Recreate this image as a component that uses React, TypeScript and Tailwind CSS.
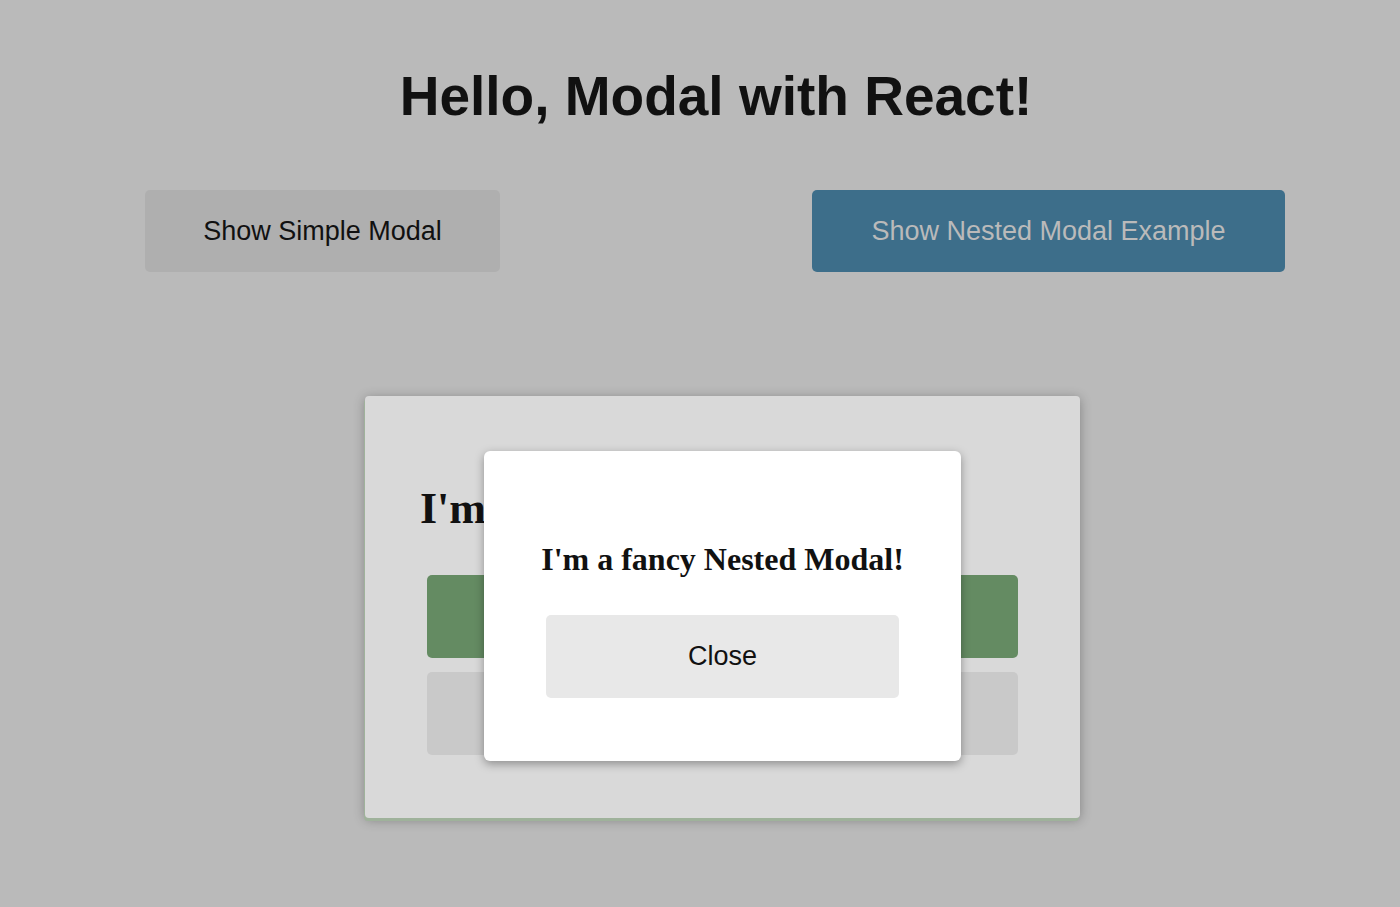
import React from 'react';

const sans = { fontFamily: '"Liberation Sans", Arial, sans-serif' };
const serif = { fontFamily: '"Liberation Serif", "Times New Roman", serif' };

const NestedModal = () => (
  <div className="absolute left-[484px] top-[451px] w-[477px] h-[310px] bg-white rounded-[6px] shadow-[0_3px_10px_rgba(0,0,0,0.35)] flex flex-col items-center pt-[92px] px-[62px]">
    <h2 className="text-[32px] leading-none font-bold text-[#111] whitespace-nowrap text-center" style={serif}>
      I'm a fancy Nested Modal!
    </h2>
    <button
      className="mt-[40px] w-full h-[83px] bg-[#e8e8e8] rounded-[5px] text-[27px] text-[#111]"
      style={sans}
    >
      Close
    </button>
  </div>
);

const ParentModal = () => (
  <div className="absolute left-[365px] top-[396px] w-[715px] h-[422px] bg-[#d9d9d9] rounded-[4px] shadow-[-1px_3px_0_#9fb29b,0_2px_12px_rgba(0,0,0,0.3)] flex flex-col pt-[91px]">
    <h1 className="pl-[55px] text-[44px] leading-none font-bold text-[#111]" style={serif}>
      I'm a fancy Modal!
    </h1>
    <div className="mt-[44px] px-[62px] flex flex-col gap-[14px]">
      <button
        className="h-[83px] bg-[#648b62] rounded-[5px] text-[27px] text-[#d9d9d9]"
        style={sans}
      >
        Open Nested Modal
      </button>
      <button
        className="h-[83px] bg-[#c9c9c9] rounded-[5px] text-[27px] text-[#111]"
        style={sans}
      >
        Close
      </button>
    </div>
  </div>
);

export default function App() {
  return (
    <div className="relative w-full h-[907px] bg-[#bababa] overflow-hidden" style={sans}>
      <h1 className="pt-[69px] pl-[32px] text-center text-[55px] leading-[55px] font-bold text-[#111]">
        Hello, Modal with React!
      </h1>

      <div className="mt-[66px] flex pl-[145px] gap-[312px]">
        <button className="w-[355px] h-[82px] bg-[#afafaf] rounded-[5px] text-[27px] text-[#111]">
          Show Simple Modal
        </button>
        <button className="w-[473px] h-[82px] bg-[#3d6e8a] rounded-[5px] text-[27px] text-[#bababa]">
          Show Nested Modal Example
        </button>
      </div>

      <ParentModal />
      <NestedModal />
    </div>
  );
}
